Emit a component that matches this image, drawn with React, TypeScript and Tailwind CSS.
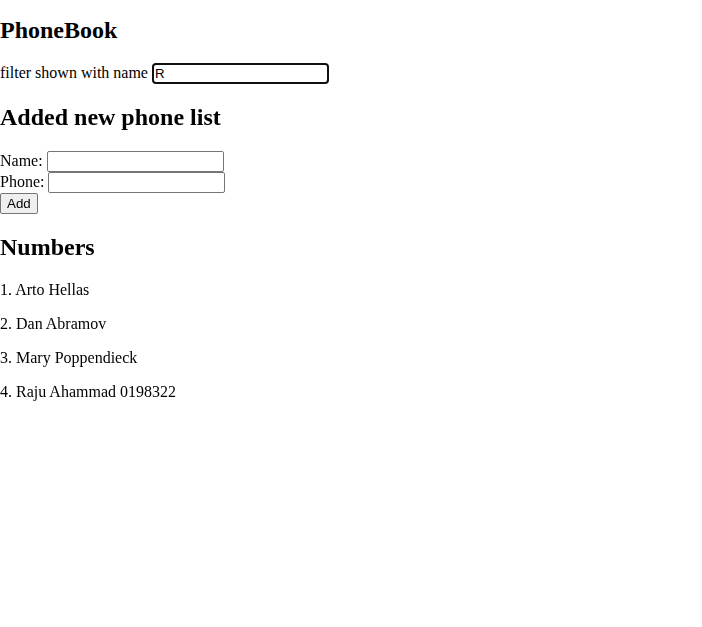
import { useState } from 'react';

const persons = [
  { name: 'Arto Hellas', number: '' },
  { name: 'Dan Abramov', number: '' },
  { name: 'Mary Poppendieck', number: '' },
  { name: 'Raju Ahammad', number: '0198322' },
];

const inputCls =
  'w-[177px] h-[21px] align-baseline border border-[#767676] rounded-[2px] bg-white px-[2px] text-[13.33px] text-black [font-family:"Liberation_Sans",Arial,sans-serif]';

export default function App() {
  const [filter, setFilter] = useState('R');
  const [name, setName] = useState('');
  const [phone, setPhone] = useState('');

  return (
    <div className='bg-white text-black text-[16px] leading-[1.15] [font-family:"Liberation_Serif","Times_New_Roman",serif] min-h-[627px]'>
      <h2 className="text-[24px] font-bold mt-[17px] mb-[17.92px]">PhoneBook</h2>
      <div>
        filter shown with name{' '}
        <input
          autoFocus
          className={inputCls}
          value={filter}
          onChange={(e) => setFilter(e.target.value)}
        />
      </div>
      <h2 className="text-[24px] font-bold mt-[20.92px] mb-[18.92px]">Added new phone list</h2>
      <form onSubmit={(e) => e.preventDefault()}>
        <div>
          Name:{' '}
          <input className={inputCls} value={name} onChange={(e) => setName(e.target.value)} />
        </div>
        <div>
          Phone:{' '}
          <input className={inputCls} value={phone} onChange={(e) => setPhone(e.target.value)} />
        </div>
        <div>
          <button
            type="submit"
            className='h-[21px] px-[6px] align-baseline bg-[#efefef] border border-[#767676] rounded-[2px] text-[13.33px] [font-family:"Liberation_Sans",Arial,sans-serif]'
          >
            Add
          </button>
        </div>
      </form>
      <h2 className="text-[24px] font-bold my-[19.92px]">Numbers</h2>
      {persons.map((p, i) => (
        <p key={p.name} className="my-4 leading-[18px]">
          {i + 1}. {p.name} {p.number}
        </p>
      ))}
    </div>
  );
}
